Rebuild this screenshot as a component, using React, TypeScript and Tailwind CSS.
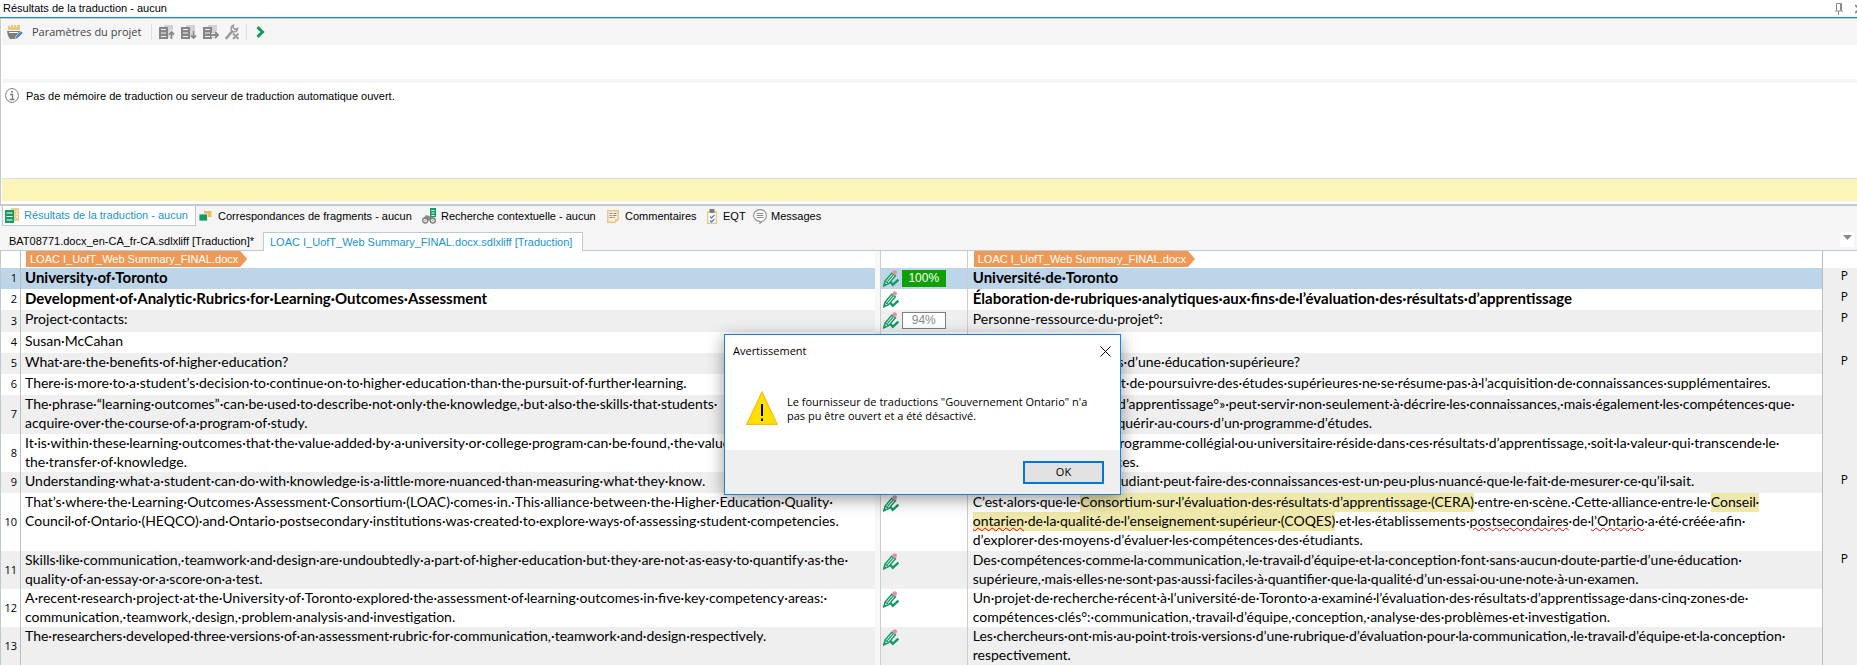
import React from 'react';
import clsx from 'clsx';

interface Segment {
  id: number;
  height: string;
  source: string[];
  target: React.ReactNode[];
  match?: '100%' | '94%';
  bold?: boolean;
  paragraph?: boolean;
}

const Term = ({ children }: { children: React.ReactNode }) => (
  <span className="bg-[#eee8aa] inline-block h-[19px]">{children}</span>
);

const Misspelled = ({ children }: { children: React.ReactNode }) => (
  <span className="underline decoration-wavy decoration-red-600 decoration-1 underline-offset-1">{children}</span>
);

const segments: Segment[] = [
  {
    id: 1,
    height: 'h-[21px]',
    bold: true,
    paragraph: true,
    match: '100%',
    source: ['University·of·Toronto'],
    target: ['Université·de·Toronto'],
  },
  {
    id: 2,
    height: 'h-[21px]',
    bold: true,
    paragraph: true,
    source: ['Development·of·Analytic·Rubrics·for·Learning·Outcomes·Assessment'],
    target: ['Élaboration·de·rubriques·analytiques·aux·fins·de·l’évaluation·des·résultats·d’apprentissage'],
  },
  {
    id: 3,
    height: 'h-[22px]',
    paragraph: true,
    match: '94%',
    source: ['Project·contacts:'],
    target: ['Personne-ressource·du·projet°:'],
  },
  {
    id: 4,
    height: 'h-[21px]',
    source: ['Susan·McCahan'],
    target: ['Susan·McCahan'],
  },
  {
    id: 5,
    height: 'h-[21px]',
    paragraph: true,
    source: ['What·are·the·benefits·of·higher·education?'],
    target: ['Quels·sont·les·avantages·d’une·éducation·supérieure?'],
  },
  {
    id: 6,
    height: 'h-[21px]',
    source: ['There·is·more·to·a·student’s·decision·to·continue·on·to·higher·education·than·the·pursuit·of·further·learning.'],
    target: ['La·décision·d’un·étudiant·de·poursuivre·des·études·supérieures·ne·se·résume·pas·à·l’acquisition·de·connaissances·supplémentaires.'],
  },
  {
    id: 7,
    height: 'h-[39px]',
    source: [
      'The·phrase·“learning·outcomes”·can·be·used·to·describe·not·only·the·knowledge,·but·also·the·skills·that·students·',
      'acquire·over·the·course·of·a·program·of·study.',
    ],
    target: [
      'L’expression·«°résultats·d’apprentissage°»·peut·servir·non·seulement·à·décrire·les·connaissances,·mais·également·les·compétences·que·',
      'les·étudiants·doivent·acquérir·au·cours·d’un·programme·d’études.',
    ],
  },
  {
    id: 8,
    height: 'h-[38px]',
    source: [
      'It·is·within·these·learning·outcomes·that·the·value·added·by·a·university·or·college·program·can·be·found,·the·value·',
      'the·transfer·of·knowledge.',
    ],
    target: [
      'La·valeur·ajoutée·d’un·programme·collégial·ou·universitaire·réside·dans·ces·résultats·d’apprentissage,·soit·la·valeur·qui·transcende·le·',
      'transfert·de·connaissances.',
    ],
  },
  {
    id: 9,
    height: 'h-[21px]',
    paragraph: true,
    source: ['Understanding·what·a·student·can·do·with·knowledge·is·a·little·more·nuanced·than·measuring·what·they·know.'],
    target: ['Comprendre·ce·qu’un·étudiant·peut·faire·des·connaissances·est·un·peu·plus·nuancé·que·le·fait·de·mesurer·ce·qu’il·sait.'],
  },
  {
    id: 10,
    height: 'h-[58px]',
    source: [
      'That’s·where·the·Learning·Outcomes·Assessment·Consortium·(LOAC)·comes·in.·This·alliance·between·the·Higher·Education·Quality·',
      'Council·of·Ontario·(HEQCO)·and·Ontario·postsecondary·institutions·was·created·to·explore·ways·of·assessing·student·competencies.',
    ],
    target: [
      <>C’est·alors·que·le·<Term>Consortium·sur·l’évaluation·des·résultats·d’apprentissage·(CERA)</Term>·entre·en·scène.·Cette·alliance·entre·le·<Term>Conseil·</Term></>,
      <><Term><Misspelled>ontarien</Misspelled>·de·la·qualité·de·l’enseignement·supérieur·(COQES)</Term>·et·les·établissements·<Misspelled>postsecondaires</Misspelled>·de·<Misspelled>l’Ontario</Misspelled>·a·été·créée·afin·</>,
      'd’explorer·des·moyens·d’évaluer·les·compétences·des·étudiants.',
    ],
  },
  {
    id: 11,
    height: 'h-[38px]',
    paragraph: true,
    source: [
      'Skills·like·communication,·teamwork·and·design·are·undoubtedly·a·part·of·higher·education·but·they·are·not·as·easy·to·quantify·as·the·',
      'quality·of·an·essay·or·a·score·on·a·test.',
    ],
    target: [
      'Des·compétences·comme·la·communication,·le·travail·d’équipe·et·la·conception·font·sans·aucun·doute·partie·d’une·éducation·',
      'supérieure,·mais·elles·ne·sont·pas·aussi·faciles·à·quantifier·que·la·qualité·d’un·essai·ou·une·note·à·un·examen.',
    ],
  },
  {
    id: 12,
    height: 'h-[38px]',
    source: [
      'A·recent·research·project·at·the·University·of·Toronto·explored·the·assessment·of·learning·outcomes·in·five·key·competency·areas:·',
      'communication,·teamwork,·design,·problem·analysis·and·investigation.',
    ],
    target: [
      'Un·projet·de·recherche·récent·à·l’université·de·Toronto·a·examiné·l’évaluation·des·résultats·d’apprentissage·dans·cinq·zones·de·',
      'compétences·clés°:·communication,·travail·d’équipe,·conception,·analyse·des·problèmes·et·investigation.',
    ],
  },
  {
    id: 13,
    height: 'h-[38px]',
    source: ['The·researchers·developed·three·versions·of·an·assessment·rubric·for·communication,·teamwork·and·design·respectively.'],
    target: [
      'Les·chercheurs·ont·mis·au·point·trois·versions·d’une·rubrique·d’évaluation·pour·la·communication,·le·travail·d’équipe·et·la·conception·',
      'respectivement.',
    ],
  },
];

function StatusIcon() {
  return (
    <svg width="16" height="17" viewBox="0 0 16 17" fill="none" className="shrink-0">
      <path d="M.8 15.8 2 11.2 8.8 3.2 12.4 5.8 5.6 13.6Z" fill="#fff" stroke="#159a63" strokeWidth="1.4" />
      <path d="M2.2 11.2 5.4 13.4M4.4 11.6 10.4 4.6" stroke="#159a63" strokeWidth="1.3" />
      <path d="M.3 16.3 1.2 12.6 3.8 14.6Z" fill="#159a63" />
      <circle cx="11.7" cy="2.6" r="2.3" fill="#e68fa2" />
      <path d="M7.2 11.8 9.8 14.8 15.4 9.6" stroke="#159a63" strokeWidth="2.5" />
    </svg>
  );
}

function ProjectSettingsIcon() {
  return (
    <svg width="16" height="15" viewBox="0 0 16 15">
      <path d="M1 1h2v1h1V0h2v2h1V0h2v2h1V0h3v5H1Z" fill="#eec67c" />
      <path d="M0 6h14l-1.5 4L9 14H3L1 11Z" fill="#7d7d7d" />
      <path d="M2 7.5h9" stroke="#fff" />
      <path d="m8 14.5 1-3.5 5-5 2 2-5 5Z" fill="#4b86c6" stroke="#f5f5f5" strokeWidth=".6" />
    </svg>
  );
}

function DatabaseIcon({ arrow }: { arrow: string }) {
  return (
    <svg width="16" height="16" viewBox="0 0 16 16" fill="none">
      <path d="M5 1h9v13H9V3H5Z" fill="#d2d2d2" />
      <path d="M0 3h9v12H0Z" fill="#858585" />
      <path d="M2 5.5h5M2 9h5M2 12.5h5" stroke="#f5f5f5" strokeWidth="1.2" />
      <path d={arrow} stroke="#f5f5f5" strokeWidth="3.5" />
      <path d={arrow} stroke="#8a8a8a" strokeWidth="1.9" />
    </svg>
  );
}

function WrenchIcon() {
  return (
    <svg width="15" height="16" viewBox="0 0 15 16" fill="none" stroke="#9a9a9a">
      <path d="M1.5 14 7 7.5" strokeWidth="2.6" strokeLinecap="round" />
      <path d="M8.5 1.2C5.5 2.2 5.4 6 7.4 7.6 10 8.6 12.4 7 12.6 4.4L10 5.4 8.2 3.8Z" strokeWidth="1.5" />
      <path d="m8 9.5 5.5 5.5M13.5 9.5 8 15" strokeWidth="1.8" />
    </svg>
  );
}

function ResultsIcon() {
  return (
    <svg width="15" height="15" viewBox="0 0 15 15">
      <path d="M6 0h8v13H9V3H6Z" fill="#f0cd8a" />
      <path d="M11 3h2M11 6h2M11 9h2" stroke="#fff" />
      <path d="M0 2h9v13H0Z" fill="#159a63" />
      <path d="M1.5 5h6M1.5 8.5h6M1.5 12h6" stroke="#fff" strokeWidth="1.1" />
    </svg>
  );
}

function FragmentsIcon() {
  return (
    <svg width="13" height="12" viewBox="0 0 13 12">
      <path d="M5 1h7.5v6H5Z" fill="#eebb55" />
      <path d="M0 4h8.5v7H0Z" fill="#159a63" stroke="#f5f5f5" strokeWidth=".8" />
    </svg>
  );
}

function ConcordanceIcon() {
  return (
    <svg width="15" height="16" viewBox="0 0 15 16" fill="none">
      <path d="M8 0h6v9H8Z" fill="#159a63" />
      <path d="M9.5 2.5h3M9.5 5h3M9.5 7.5h3" stroke="#fff" />
      <path d="M2 9.5 4 7l3 1 3 1.5 3 1-2 2H2Z" fill="#8a8a8a" />
      <circle cx="3.2" cy="12.5" r="2.5" fill="#f5f5f5" stroke="#7d7d7d" strokeWidth="1.3" />
      <circle cx="10.8" cy="12.5" r="2.5" fill="#f5f5f5" stroke="#7d7d7d" strokeWidth="1.3" />
      <path d="m2 13.5 2-2M9.8 13.5l2-2" stroke="#7d7d7d" />
    </svg>
  );
}

function CommentsIcon() {
  return (
    <svg width="12" height="13" viewBox="0 0 12 13" fill="none">
      <path d="M.8.8h10.4v8L8 12.2H.8Z" fill="#fbf3e0" stroke="#ecc67f" strokeWidth="1.5" />
      <path d="M2.5 3.5h3M6.5 3.5h3M2.5 5.5h2M5.5 5.5h4M2.5 7.5h3M6.5 7.5h1.5" stroke="#8a8a8a" />
      <path d="M8 12V9h3.5Z" fill="#ecc67f" />
    </svg>
  );
}

function QualityIcon() {
  return (
    <svg width="10" height="15" viewBox="0 0 10 15" fill="none">
      <path d="M.7 3h8.6v11.3H.7Z" fill="#fff" stroke="#ecc67f" strokeWidth="1.3" />
      <path d="M2.5 0h5v4h-5Z" fill="#7d7d7d" />
      <path d="m3 7.5 1.5 1.5L7.5 6M3 11.5 4.5 13l3-3" stroke="#4b86c6" strokeWidth="1.3" />
    </svg>
  );
}

function MessagesIcon() {
  return (
    <svg width="14" height="15" viewBox="0 0 14 15" fill="none" stroke="#8a8a8a">
      <path d="M7 .6c3.6 0 6.4 2.6 6.4 5.8S10.6 12.2 9 12.2L7 14.2v-2C3.4 12.2.6 9.6.6 6.4S3.4.6 7 .6Z" fill="#fff" strokeWidth="1.1" />
      <path d="M3.5 4.5h7M3.5 6.5h7M3.5 8.5h7" />
    </svg>
  );
}

const panes = [
  { label: 'Correspondances de fragments - aucun', icon: <FragmentsIcon />, box: 'w-[223px] gap-[6px]' },
  { label: 'Recherche contextuelle - aucun', icon: <ConcordanceIcon />, box: 'w-[185px] gap-1' },
  { label: 'Commentaires', icon: <CommentsIcon />, box: 'w-[100px] gap-[6px]' },
  { label: 'EQT', icon: <QualityIcon />, box: 'w-[46px] gap-[6px]' },
  { label: 'Messages', icon: <MessagesIcon />, box: 'gap-1' },
];

function FileTag() {
  return (
    <span className="inline-block h-4 pl-1 pr-[9px] bg-[#ee9a56] text-white text-[11px] leading-4 align-top whitespace-nowrap [clip-path:polygon(0_0,calc(100%-7px)_0,100%_50%,calc(100%-7px)_100%,0_100%)]">
      LOAC I_UofT_Web Summary_FINAL.docx
    </span>
  );
}

function SegmentText({ lines, bold }: { lines: React.ReactNode[]; bold?: boolean }) {
  return (
    <div className={clsx(
      "overflow-hidden whitespace-nowrap font-['Lato','Open_Sans',sans-serif]",
      bold ? 'text-[15px] leading-[19px] font-bold' : 'text-sm leading-[17px]'
    )}>
      {lines.map((line, i) => (
        <div key={i} className="h-[19px]">{line}</div>
      ))}
    </div>
  );
}

function SegmentRow({ segment }: { segment: Segment }) {
  const { id, height, source, target, match, bold, paragraph } = segment;
  const fill = id === 1 ? 'bg-[#bdd5e8]' : id % 2 ? 'bg-[#efefef]' : 'bg-white';

  return (
    <tr className={clsx(height, fill)}>
      <td className="border-r border-[#bdbdbd] pr-[3px] text-right align-middle font-['Open_Sans',sans-serif] text-[11px] leading-4">{id}</td>
      <td className="pl-1 align-top"><SegmentText lines={source} bold={bold} /></td>
      <td className="bg-[#f7f7f7] border-r border-[#cdcdcd]" />
      <td className="border-r border-[#cdcdcd] pl-[2px] pt-[2px] align-top">
        <div className="flex gap-[3px] h-[17px]">
          <StatusIcon />
          {match && (
            <span className={clsx(
              'w-11 border text-center text-xs leading-[15px]',
              match === '100%' ? 'bg-[#10a005] border-[#10a005] text-white' : 'bg-white border-[#808080] text-[#8a8a8a]'
            )}>
              {match}
            </span>
          )}
        </div>
      </td>
      <td className="pl-[5px] border-r border-[#bdbdbd] align-top"><SegmentText lines={target} bold={bold} /></td>
      <td className="bg-[#efefef] pr-[9px] text-right align-top font-['Open_Sans',sans-serif] text-xs leading-4">{paragraph && 'P'}</td>
    </tr>
  );
}

function WarningDialog() {
  return (
    <div
      role="dialog"
      aria-labelledby="dialog-title"
      className="absolute left-[724px] top-[334px] w-[397px] border border-[#1883d7] bg-white shadow-[0_4px_16px_rgba(0,0,0,0.4)] font-['Open_Sans',sans-serif] text-[11px]"
    >
      <div className="flex items-center justify-between h-8 pl-2 pr-[9px]">
        <h2 id="dialog-title">Avertissement</h2>
        <button aria-label="Fermer">
          <svg width="11" height="11" viewBox="0 0 11 11" stroke="#000"><path d="m.5.5 10 10M10.5.5l-10 10" /></svg>
        </button>
      </div>
      <div className="flex gap-[9px] h-[83px] pl-[21px] pt-6">
        <svg width="32" height="34" viewBox="0 0 32 34" className="shrink-0">
          <path d="M16 1 31.3 33.4H.7Z" fill="#ffe000" stroke="#fdbb14" strokeWidth="1.2" />
          <path d="M16 13v12M16 27.5v2.5" stroke="#000" strokeWidth="2" />
        </svg>
        <p className="w-[310px] pt-[4px] leading-[14px]">
          Le fournisseur de traductions "Gouvernement Ontario" n'a<br />pas pu être ouvert et a été désactivé.
        </p>
      </div>
      <div className="flex justify-end h-11 pt-[11px] pr-4 bg-[#efefef]">
        <button className="w-[81px] h-[23px] border-2 border-[#0078d7] bg-[#e1e1e1]">OK</button>
      </div>
    </div>
  );
}

export default function App() {
  return (
    <div className="relative bg-white text-black overflow-hidden font-['Liberation_Sans',Arial,sans-serif] text-[11px]">
      {/* Translation results panel */}
      <header className="flex items-center justify-between h-[18px] pl-[3px] border-b border-[#0f8fce] overflow-hidden">
        <h1>Résultats de la traduction - aucun</h1>
        <div className="flex items-center gap-3 -mr-2">
          <svg width="8" height="12" viewBox="0 0 8 12" fill="none" stroke="#8a8a8a">
            <path d="M1.5 7.5v-7h5v7M5.5.5v7M0 8h8M3.5 8v4" />
          </svg>
          <svg width="10" height="10" viewBox="0 0 10 10" stroke="#8a8a8a" strokeWidth="2"><path d="m0 1 9 8M9 1 0 9" /></svg>
        </div>
      </header>
      <section className="border-l border-t border-[#c8c8c8] pl-px">
        <div className="flex items-center h-[26px] pl-[5px] bg-[#f5f5f5]">
          <button className="flex items-center gap-[9px] w-[145px] border-r border-[#e0e0e0] text-[#444] font-['Open_Sans',sans-serif]">
            <ProjectSettingsIcon />
            Paramètres du projet
          </button>
          <div className="flex items-center gap-[6px] w-[95px] pl-[7px] border-r border-[#e0e0e0]">
            <button aria-label="Appliquer"><DatabaseIcon arrow="M12.5 15V8M10 10.5 12.5 8 15 10.5" /></button>
            <button aria-label="Ajouter"><DatabaseIcon arrow="M12.5 7v7M10 11.5l2.5 2.5 2.5-2.5" /></button>
            <button aria-label="Mettre à jour"><DatabaseIcon arrow="M8 11h7M12 8l3 3-3 3" /></button>
            <button aria-label="Outils"><WrenchIcon /></button>
          </div>
          <button aria-label="Suivant" className="ml-[9px]">
            <svg width="9" height="12" viewBox="0 0 9 12" fill="none" stroke="#159a63" strokeWidth="3"><path d="m1.5 1.2 5 4.8-5 4.8" /></svg>
          </button>
        </div>
        <div className="h-[34px]" />
        <div className="h-1 bg-[#f5f5f5]" />
        <div className="flex items-start gap-[7px] h-[95px] pt-[5px] pl-[3px]">
          <svg width="14" height="15" viewBox="0 0 14 15" fill="none" stroke="#7d7d7d">
            <ellipse cx="7" cy="7.5" rx="6.4" ry="6.9" />
            <path d="M5 6.5h2.5v5M4.5 11.5h5" strokeWidth="1.3" />
            <path d="M6 3h2v1.5H6Z" fill="#7d7d7d" stroke="none" />
          </svg>
          <p className="leading-[17px]">
            Pas de mémoire de traduction ou serveur de traduction automatique ouvert.
          </p>
        </div>
        <div className="h-[23px] border-t border-[#d5e0f2] bg-[#fbf6b8]" />
        <div className="h-[3px]" />
      </section>

      {/* Pane tabs and document tabs */}
      <nav className="h-[28px] flex items-start pl-[2px] border-t-2 border-[#c3cbd0] bg-[#f5f5f5]">
        <button className="flex items-center gap-1 w-[194px] h-5 pl-[2px] border border-t-0 border-[#bccad2] bg-white text-[#1a93d0] mr-[3px]">
          <ResultsIcon />
          Résultats de la traduction - aucun
        </button>
        {panes.map((pane) => (
          <button key={pane.label} className={clsx('flex items-center h-5 whitespace-nowrap', pane.box)}>
            {pane.icon}
            {pane.label}
          </button>
        ))}
      </nav>
      <nav className="flex items-stretch h-[19px] bg-[#f5f5f5]">
        <button className="w-[263px] pl-[9px] text-left border-b border-[#bccad2] whitespace-nowrap">BAT08771.docx_en-CA_fr-CA.sdlxliff [Traduction]*</button>
        <button className="w-[320px] pl-[6px] text-left border-x border-t border-[#bccad2] bg-white text-[#1a93d0] whitespace-nowrap">LOAC I_UofT_Web Summary_FINAL.docx.sdlxliff [Traduction]</button>
        <div className="flex flex-1 justify-end pr-[3px] border-b border-[#bccad2]">
          <button aria-label="Documents ouverts" className="flex items-start justify-center w-[14px] h-[15px] pt-[3px] bg-white">
            <svg width="9" height="5" viewBox="0 0 9 5" fill="#8a8a8a"><path d="M0 0h9L4.5 5Z" /></svg>
          </button>
        </div>
      </nav>

      {/* Segment editor */}
      <table className="w-full table-fixed border-collapse border-l border-[#bccad2]">
        <colgroup>
          <col className="w-5" />
          <col />
          <col className="w-[5px]" />
          <col className="w-[87px]" />
          <col />
          <col className="w-[35px]" />
        </colgroup>
        <tbody>
          <tr className="h-4">
            <td className="border-r border-[#bdbdbd]" />
            <td className="pl-[5px] align-top"><FileTag /></td>
            <td className="bg-[#f7f7f7] border-r border-[#cdcdcd]" />
            <td className="border-r border-[#cdcdcd]" />
            <td className="pl-[6px] border-r border-[#bdbdbd] align-top"><FileTag /></td>
            <td />
          </tr>
          {segments.map((segment) => <SegmentRow key={segment.id} segment={segment} />)}
        </tbody>
      </table>

      <WarningDialog />
    </div>
  );
}
